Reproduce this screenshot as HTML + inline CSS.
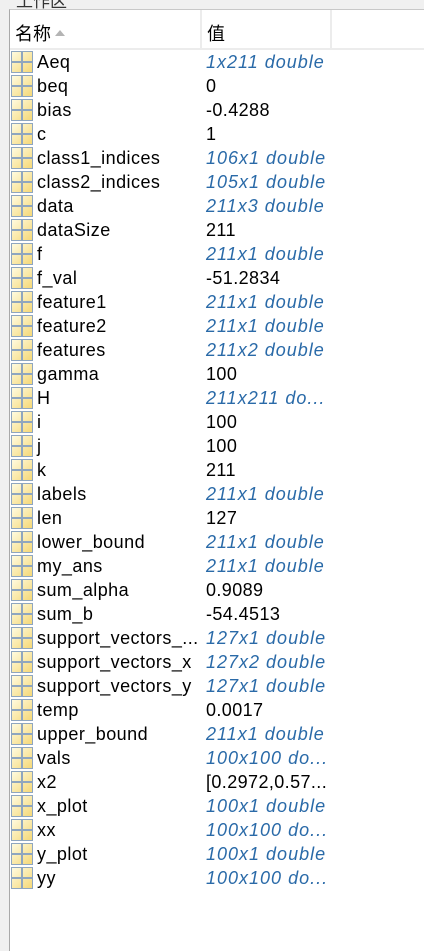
<!DOCTYPE html>
<html><head><meta charset="utf-8"><style>
body{margin:0;width:424px;height:951px;background:#f0f0f0;position:relative;overflow:hidden;font-family:"Liberation Sans","Noto Sans CJK SC",sans-serif;}
.title{position:absolute;left:16px;top:-13px;font-size:17px;color:#333;}
.panel{position:absolute;left:9px;top:9px;right:0;bottom:0;background:#fff;border-left:1px solid #a9a9a9;border-top:1px solid #c8c8c8;}
.hdr{position:absolute;left:0;top:0;right:0;height:38px;border-bottom:2px solid #ececec;font-size:18px;}
.hdr .c1{position:absolute;left:5px;top:10px;}
.hdr .c2{position:absolute;left:197px;top:10px;}
.d1{position:absolute;left:190px;top:0;width:2px;height:38px;background:#ececec;}
.d2{position:absolute;left:320px;top:0;width:2px;height:38px;background:#ececec;}
.arrow{display:inline-block;width:0;height:0;border-left:5px solid transparent;border-right:5px solid transparent;border-bottom:6px solid #b4b4b4;margin-left:4px;vertical-align:4px;}
.row{position:absolute;left:0;height:24px;width:415px;font-size:18px;line-height:24px;color:#000;}
.ic{position:absolute;left:1px;top:1px;width:20px;height:20px;border:1px solid #8fa6bf;background:linear-gradient(135deg,#fffbe0,#f5d878);}
.ic:before{content:"";position:absolute;left:9px;top:0;width:2px;height:20px;background:#8fa6bf;}
.ic:after{content:"";position:absolute;top:9px;left:0;height:2px;width:20px;background:#8fa6bf;}
.n{position:absolute;left:27px;top:0;letter-spacing:0.45px;}
.v{position:absolute;left:196px;top:0;letter-spacing:0.4px;}
.v.i{font-style:italic;color:#2a6aa8;letter-spacing:1px;}
</style></head><body>
<div class="title">工作区</div>
<div class="panel">
<div class="hdr"><span class="c1">名称<span class="arrow"></span></span><span class="c2">值</span><div class="d1"></div><div class="d2"></div></div>
<div class="row" style="top:40px"><div class="ic"></div><span class="n">Aeq</span><span class="v i">1x211 double</span></div>
<div class="row" style="top:64px"><div class="ic"></div><span class="n">beq</span><span class="v">0</span></div>
<div class="row" style="top:88px"><div class="ic"></div><span class="n">bias</span><span class="v">-0.4288</span></div>
<div class="row" style="top:112px"><div class="ic"></div><span class="n">c</span><span class="v">1</span></div>
<div class="row" style="top:136px"><div class="ic"></div><span class="n">class1_indices</span><span class="v i">106x1 double</span></div>
<div class="row" style="top:160px"><div class="ic"></div><span class="n">class2_indices</span><span class="v i">105x1 double</span></div>
<div class="row" style="top:184px"><div class="ic"></div><span class="n">data</span><span class="v i">211x3 double</span></div>
<div class="row" style="top:208px"><div class="ic"></div><span class="n">dataSize</span><span class="v">211</span></div>
<div class="row" style="top:232px"><div class="ic"></div><span class="n">f</span><span class="v i">211x1 double</span></div>
<div class="row" style="top:256px"><div class="ic"></div><span class="n">f_val</span><span class="v">-51.2834</span></div>
<div class="row" style="top:280px"><div class="ic"></div><span class="n">feature1</span><span class="v i">211x1 double</span></div>
<div class="row" style="top:304px"><div class="ic"></div><span class="n">feature2</span><span class="v i">211x1 double</span></div>
<div class="row" style="top:328px"><div class="ic"></div><span class="n">features</span><span class="v i">211x2 double</span></div>
<div class="row" style="top:352px"><div class="ic"></div><span class="n">gamma</span><span class="v">100</span></div>
<div class="row" style="top:376px"><div class="ic"></div><span class="n">H</span><span class="v i">211x211 do...</span></div>
<div class="row" style="top:400px"><div class="ic"></div><span class="n">i</span><span class="v">100</span></div>
<div class="row" style="top:424px"><div class="ic"></div><span class="n">j</span><span class="v">100</span></div>
<div class="row" style="top:448px"><div class="ic"></div><span class="n">k</span><span class="v">211</span></div>
<div class="row" style="top:472px"><div class="ic"></div><span class="n">labels</span><span class="v i">211x1 double</span></div>
<div class="row" style="top:496px"><div class="ic"></div><span class="n">len</span><span class="v">127</span></div>
<div class="row" style="top:520px"><div class="ic"></div><span class="n">lower_bound</span><span class="v i">211x1 double</span></div>
<div class="row" style="top:544px"><div class="ic"></div><span class="n">my_ans</span><span class="v i">211x1 double</span></div>
<div class="row" style="top:568px"><div class="ic"></div><span class="n">sum_alpha</span><span class="v">0.9089</span></div>
<div class="row" style="top:592px"><div class="ic"></div><span class="n">sum_b</span><span class="v">-54.4513</span></div>
<div class="row" style="top:616px"><div class="ic"></div><span class="n">support_vectors_...</span><span class="v i">127x1 double</span></div>
<div class="row" style="top:640px"><div class="ic"></div><span class="n">support_vectors_x</span><span class="v i">127x2 double</span></div>
<div class="row" style="top:664px"><div class="ic"></div><span class="n">support_vectors_y</span><span class="v i">127x1 double</span></div>
<div class="row" style="top:688px"><div class="ic"></div><span class="n">temp</span><span class="v">0.0017</span></div>
<div class="row" style="top:712px"><div class="ic"></div><span class="n">upper_bound</span><span class="v i">211x1 double</span></div>
<div class="row" style="top:736px"><div class="ic"></div><span class="n">vals</span><span class="v i">100x100 do...</span></div>
<div class="row" style="top:760px"><div class="ic"></div><span class="n">x2</span><span class="v">[0.2972,0.57...</span></div>
<div class="row" style="top:784px"><div class="ic"></div><span class="n">x_plot</span><span class="v i">100x1 double</span></div>
<div class="row" style="top:808px"><div class="ic"></div><span class="n">xx</span><span class="v i">100x100 do...</span></div>
<div class="row" style="top:832px"><div class="ic"></div><span class="n">y_plot</span><span class="v i">100x1 double</span></div>
<div class="row" style="top:856px"><div class="ic"></div><span class="n">yy</span><span class="v i">100x100 do...</span></div>
</div>
</body></html>
